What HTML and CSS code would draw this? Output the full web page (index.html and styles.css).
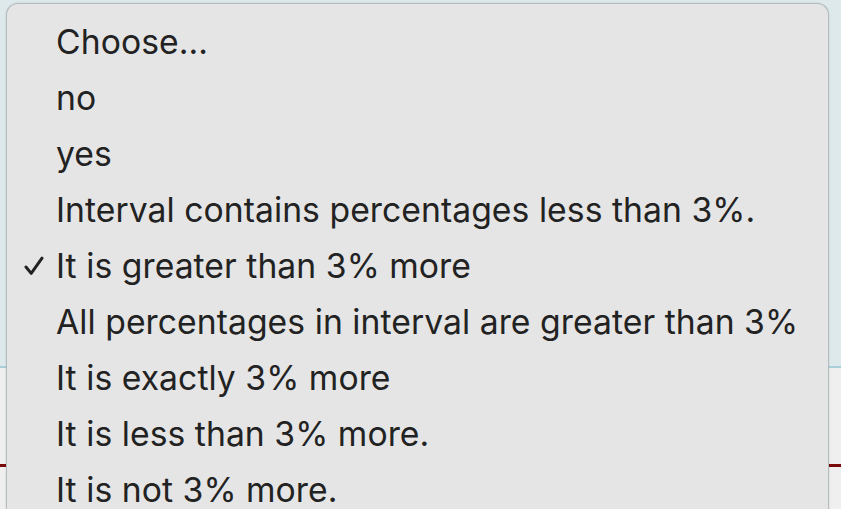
FILE: index.html
```html
<!DOCTYPE html>
<html lang="en">
<head>
<meta charset="utf-8">
<title>Answer</title>
<link rel="stylesheet" href="styles.css">
</head>
<body>
<div class="page">
  <div class="panel"></div>
  <div class="sheet">
    <div class="rule"></div>
  </div>
</div>
<ul class="menu">
  <li class="item">Choose...</li>
  <li class="item">no</li>
  <li class="item">yes</li>
  <li class="item">Interval contains percentages less than 3%.</li>
  <li class="item checked"><svg class="check" viewBox="0 0 20 20" width="20" height="20"><path d="M2 11 L7.2 17.4 L18 2.2" fill="none" stroke="#222" stroke-width="3" stroke-linecap="round" stroke-linejoin="round"/></svg>It is greater than 3% more</li>
  <li class="item">All percentages in interval are greater than 3%</li>
  <li class="item">It is exactly 3% more</li>
  <li class="item">It is less than 3% more.</li>
  <li class="item">It is not 3% more.</li>
</ul>
</body>
</html>
```

FILE: styles.css
```css
html, body {
  margin: 0;
  padding: 0;
  width: 841px;
  height: 509px;
  overflow: hidden;
}

body {
  position: relative;
  background: #eeeeee;
  font-family: Inter, "Noto Sans", sans-serif;
}

.page {
  display: flex;
  flex-direction: column;
  height: 100%;
}

.panel {
  height: 366px;
  background: #dde9eb;
  border-bottom: 2px solid #a9d0d8;
}

.sheet {
  flex: 1;
  background: #efefef;
  padding-top: 96px;
}

.rule {
  height: 3px;
  background: #7a0a0a;
}

/* dropdown list, open over the page; its lower edge runs past the window */
.menu {
  position: absolute;
  left: 6px;
  top: 3px;
  width: 823px;
  height: 506px;
  margin: 0;
  padding: 10px 0 0 0;
  list-style: none;
  background: #e5e5e5;
  border: 1px solid #b3bcbe;
  border-bottom: none;
  border-radius: 12px 12px 0 0;
  box-sizing: border-box;
  box-shadow: 0 0 2px rgba(0, 0, 0, 0.15);
  overflow: hidden;
}

.item {
  position: relative;
  height: 56px;
  line-height: 56px;
  padding-left: 49px;
  font-size: 33.7px;
  letter-spacing: 0.05px;
  color: #222222;
  white-space: nowrap;
}

.check {
  position: absolute;
  left: 17px;
  top: 18px;
}
```
